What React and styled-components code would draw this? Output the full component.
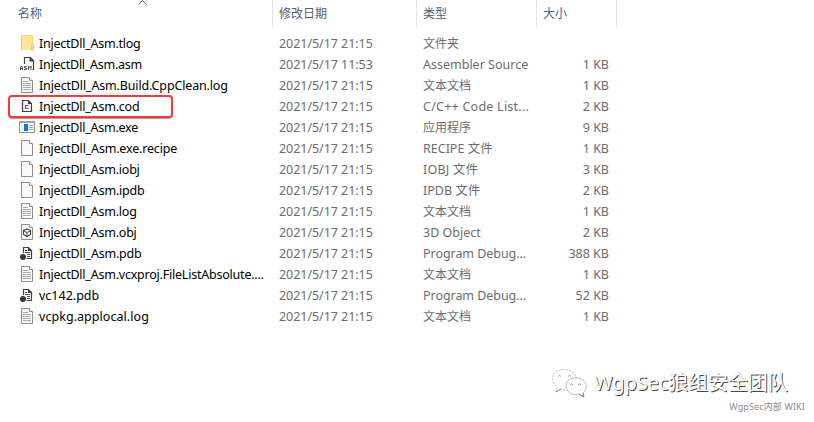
import React from "react";
import styled, { createGlobalStyle } from "styled-components";

const GlobalStyle = createGlobalStyle`
  body {
    margin: 0;
    background: #fff;
    overflow: hidden;
  }
`;

const Window = styled.main`
  position: relative;
  width: 814px;
  height: 422px;
  overflow: hidden;
  background: #fff;
  font-family: "Noto Sans", "Noto Sans CJK SC", sans-serif;
  font-size: 12.5px;
  color: #000;
`;

const columns = "273px 144px 120px 80px";

const Header = styled.header`
  position: relative;
  display: grid;
  grid-template-columns: ${columns};
  height: 27px;
  margin-bottom: 6px;
`;

const HeaderCell = styled.div`
  box-sizing: border-box;
  padding-left: ${(p) => (p.$first ? 18 : 6)}px;
  border-right: 1px solid #e5e5e5;
  font-size: 12px;
  line-height: 27px;
  color: #4c607a;
`;

const SortMark = styled.svg`
  position: absolute;
  left: 137px;
  top: 0;
`;

const Row = styled.div`
  display: grid;
  grid-template-columns: ${columns};
  height: 21px;
  line-height: 21px;
  white-space: nowrap;
`;

const NameCell = styled.div`
  display: flex;
  align-items: flex-start;
  padding-left: 18px;
`;

const FileIcon = styled.svg`
  flex: none;
  width: 18px;
  height: 18px;
  margin: 1px 3px 0 0;
`;

const FileName = styled.span`
  letter-spacing: ${(p) => p.$spacing}px;
`;

const Cell = styled.div`
  padding-left: 6px;
  color: #6d6d6d;
  letter-spacing: ${(p) => p.$spacing || 0}px;
  font-size: ${(p) => (p.$cjk ? 12 : 12.5)}px;
`;

const SizeCell = styled(Cell)`
  padding: 0 8px 0 0;
  text-align: right;
`;

const Highlight = styled.div`
  position: absolute;
  left: 8px;
  top: 95px;
  box-sizing: border-box;
  width: 165px;
  height: 23px;
  border: 2px solid #f03c3c;
  border-radius: 4px;
  box-shadow: 0 1px 1px rgba(90, 60, 60, 0.55);
`;

const Watermark = styled.div`
  position: absolute;
  left: 551px;
  top: 366px;
  display: flex;
  align-items: center;
  height: 34px;
`;

const WatermarkText = styled.span`
  margin-left: 6px;
  font-size: 20px;
  line-height: 34px;
  letter-spacing: -0.1px;
  white-space: nowrap;
  color: #fff;
  text-shadow: 1px 1px 0.5px #4a4a4a, 0 0 1px #ccc;
`;

const WikiNote = styled.div`
  position: absolute;
  right: 9px;
  top: 400px;
  font-size: 9px;
  line-height: 14px;
  letter-spacing: 0.13px;
  white-space: nowrap;
  color: #8c8c8c;
`;

function Page({ lines }) {
  return (
    <>
      <path d="M3.500 1.500h8l3 3v12h-11z" fill="#fafafa" stroke="#8f8f8f" />
      <path d="M11.500 1.500v3h3" fill="#fff" stroke="#8f8f8f" />
      {lines && <path d="M5 5.500h5M5 7.500h8M5 9.500h8M5 11.500h8M5 13.500h8" stroke="#adadad" />}
    </>
  );
}

const drawings = {
  folder: (
    <>
      <path d="M3 1h12v9h1v6H3z" fill="#ffe596" />
      <path d="M3.500 1.500h11v8" fill="none" stroke="#f5d777" />
      <path d="M3.500 1v15M13.500 16V11l1-1 1 1v5z" fill="none" stroke="#f1cd61" />
    </>
  ),
  asm: (
    <>
      <path d="M6.500 9v-6.500h6l3 3v9h-1" fill="#fff" stroke="#424242" strokeWidth="1.200" />
      <path d="M11.500 2l4.500 4.500h-4.500z" fill="#424242" />
      <path
        d="M2.500 15v-3l1-1 1 1v3M2.500 13.500h2M8.500 11.500h-2v1.500h2v1.500h-2.500M10.500 15v-4l1.300 1.500 1.200-1.500v4"
        fill="none"
        stroke="#444"
        strokeWidth="0.900"
      />
    </>
  ),
  text: <Page lines />,
  blank: <Page />,
  cod: (
    <>
      <path d="M4.500 3.500h6l3 3v8h-9z" fill="#f4f0f5" stroke="#424242" strokeWidth="1.200" />
      <path d="M10 3v4h4z" fill="#424242" />
      <path d="M10.500 8.500h-3v3h3" fill="none" stroke="#8d4894" strokeWidth="1.200" />
    </>
  ),
  exe: (
    <>
      <path d="M1.500 3.500h15v11h-15z" fill="#fff" stroke="#8a8f93" />
      <path d="M1 3h16v2H1z" fill="#9a9fa3" />
      <path d="M3 6h2v7H3z" fill="#eee" />
      <path d="M6 6h4v7H6z" fill="#0878d5" />
      <path d="M11 7.500h4M11 9.500h4M11 11.500h4" stroke="#999" />
    </>
  ),
  obj: (
    <>
      <Page />
      <path d="M9 6l3.500 1.500v4L9 13.500l-3.500-2v-4z" fill="#fff" stroke="#444" strokeWidth="1.200" />
      <path d="M6 8l3 1.500L12 8M9 9.500v3.500" fill="none" stroke="#444" />
    </>
  ),
  pdb: (
    <>
      <path d="M5.500 9V3.500h5l3 3v8h-5" fill="#fff" stroke="#424242" strokeWidth="1.200" />
      <path d="M10 3v4h4z" fill="#424242" />
      <path d="M7 6.500h2M7 8.500h5M9 10.500h3M9 12.500h3" stroke="#555" />
      <circle cx="5" cy="13" r="3" fill="#383838" />
    </>
  ),
};

const stamp = "2021/5/17 21:15";

const files = [
  { icon: "folder", name: "InjectDll_Asm.tlog", fit: -0.24, type: "文件夹", size: "" },
  { icon: "asm", name: "InjectDll_Asm.asm", fit: -0.28, date: "2021/5/17 11:53", type: "Assembler Source", size: "1 KB" },
  { icon: "text", name: "InjectDll_Asm.Build.CppClean.log", fit: -0.15, type: "文本文档", size: "1 KB" },
  { icon: "cod", name: "InjectDll_Asm.cod", fit: -0.22, type: "C/C++ Code List...", typeFit: 0.24, size: "2 KB" },
  { icon: "exe", name: "InjectDll_Asm.exe", fit: -0.24, type: "应用程序", size: "9 KB" },
  { icon: "blank", name: "InjectDll_Asm.exe.recipe", fit: -0.18, type: "RECIPE 文件", size: "1 KB" },
  { icon: "blank", name: "InjectDll_Asm.iobj", fit: -0.22, type: "IOBJ 文件", typeFit: 0.2, size: "3 KB" },
  { icon: "blank", name: "InjectDll_Asm.ipdb", fit: -0.2, type: "IPDB 文件", size: "2 KB" },
  { icon: "text", name: "InjectDll_Asm.log", fit: -0.22, type: "文本文档", size: "1 KB" },
  { icon: "obj", name: "InjectDll_Asm.obj", fit: -0.22, type: "3D Object", size: "2 KB" },
  { icon: "pdb", name: "InjectDll_Asm.pdb", fit: -0.2, type: "Program Debug...", typeFit: -0.05, size: "388 KB" },
  { icon: "text", name: "InjectDll_Asm.vcxproj.FileListAbsolute....", fit: -0.22, type: "文本文档", size: "1 KB" },
  { icon: "pdb", name: "vc142.pdb", fit: 0, type: "Program Debug...", typeFit: -0.05, size: "52 KB" },
  { icon: "text", name: "vcpkg.applocal.log", fit: 0.05, type: "文本文档", size: "1 KB" },
];

function ChatLogo() {
  return (
    <svg width="37" height="34" viewBox="0 0 37 34" fill="none" stroke="#a0a0a0" strokeWidth="0.700">
      <path d="M14 24l-4-1-5 3 1-5C-1 16 0 6 9 4c8-2 15 2 16 8" strokeDasharray="2 1.300" />
      <path d="M25 12c-8-1-13 7-8 13 3 4 8 4 11 3l5 3-1-4c7-6 2-15-7-15z" />
      <path d="M7 10.500q1.500-2.500 3 0M17 10.500q1.500-2.500 3 0M19 19q1.500-2.500 3 0M27 19q1.500-2.500 3 0" stroke="#777" />
      <path d="M5 26l5-3M28 28l5 3-1-4" stroke="#666" />
    </svg>
  );
}

export default function App() {
  return (
    <Window>
      <GlobalStyle />
      <Header>
        <HeaderCell $first>名称</HeaderCell>
        <HeaderCell>修改日期</HeaderCell>
        <HeaderCell>类型</HeaderCell>
        <HeaderCell>大小</HeaderCell>
        <SortMark width="11" height="6" fill="none" stroke="#666">
          <path d="M1.500 4.500l4-4 4 4" />
        </SortMark>
      </Header>
      {files.map((f) => (
        <Row key={f.name}>
          <NameCell>
            <FileIcon viewBox="0 0 18 18">{drawings[f.icon]}</FileIcon>
            <FileName $spacing={f.fit}>{f.name}</FileName>
          </NameCell>
          <Cell $spacing={-0.05}>{f.date || stamp}</Cell>
          <Cell $spacing={f.typeFit} $cjk={/^[^\x00-\x7f]+$/.test(f.type)}>{f.type}</Cell>
          <SizeCell>{f.size}</SizeCell>
        </Row>
      ))}
      <Highlight />
      <Watermark>
        <ChatLogo />
        <WatermarkText>WgpSec狼组安全团队</WatermarkText>
      </Watermark>
      <WikiNote>WgpSec内部 WIKI</WikiNote>
    </Window>
  );
}
